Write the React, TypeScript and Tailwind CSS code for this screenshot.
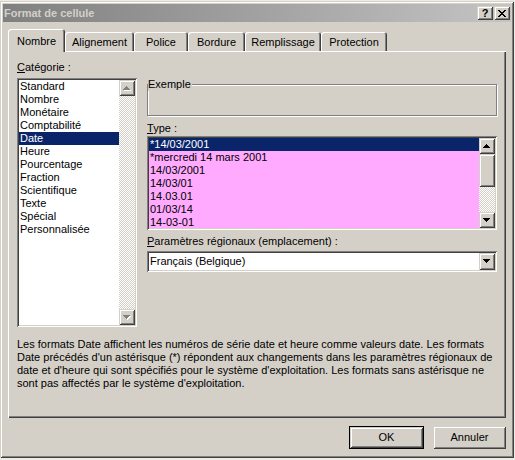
import React from "react";

const RAISED =
  "shadow-[inset_1px_1px_#d4d0c8,inset_-1px_-1px_#404040,inset_2px_2px_#ffffff,inset_-2px_-2px_#808080]";
const SUNKEN =
  "shadow-[inset_1px_1px_#808080,inset_-1px_-1px_#ffffff,inset_2px_2px_#404040,inset_-2px_-2px_#d4d0c8]";
const CHECKER =
  "bg-[image:conic-gradient(#ffffff_25%,#d4d0c8_0_50%,#ffffff_0_75%,#d4d0c8_0)] bg-[length:2px_2px]";

function Arrow({ dir, disabled }: { dir: "up" | "down"; disabled?: boolean }) {
  const rows: [number, number][] =
    dir === "up"
      ? [
          [3, 1],
          [2, 3],
          [1, 5],
          [0, 7],
        ]
      : [
          [0, 7],
          [1, 5],
          [2, 3],
          [3, 1],
        ];
  return (
    <svg width="8" height="5" viewBox="0 0 8 5" shapeRendering="crispEdges">
      {disabled &&
        rows.map(([x, w], i) => (
          <rect key={"s" + i} x={x + 1} y={i + 1} width={w} height={1} fill="#ffffff" />
        ))}
      {rows.map(([x, w], i) => (
        <rect key={i} x={x} y={i} width={w} height={1} fill={disabled ? "#808080" : "#000000"} />
      ))}
    </svg>
  );
}

function ScrollBtn({ dir, disabled }: { dir: "up" | "down"; disabled?: boolean }) {
  return (
    <div className={`w-[16px] h-[16px] shrink-0 bg-[#d4d0c8] flex items-center justify-center ${RAISED}`}>
      <Arrow dir={dir} disabled={disabled} />
    </div>
  );
}

function CloseGlyph() {
  const rows: [number, number][][] = [
    [
      [0, 2],
      [6, 2],
    ],
    [
      [1, 2],
      [5, 2],
    ],
    [[2, 4]],
    [[3, 2]],
    [[2, 4]],
    [
      [1, 2],
      [5, 2],
    ],
    [
      [0, 2],
      [6, 2],
    ],
  ];
  return (
    <svg width="8" height="7" viewBox="0 0 8 7" shapeRendering="crispEdges">
      {rows.map((r, i) =>
        r.map(([x, w], j) => <rect key={i + "-" + j} x={x} y={i} width={w} height={1} fill="#000" />)
      )}
    </svg>
  );
}

const categories = [
  "Standard",
  "Nombre",
  "Monétaire",
  "Comptabilité",
  "Date",
  "Heure",
  "Pourcentage",
  "Fraction",
  "Scientifique",
  "Texte",
  "Spécial",
  "Personnalisée",
];

const types = [
  "*14/03/2001",
  "*mercredi 14 mars 2001",
  "14/03/2001",
  "14/03/01",
  "14.03.01",
  "01/03/14",
  "14-03-01",
];

const tabs: { label: string; w: string }[] = [
  { label: "Alignement", w: "w-[69px]" },
  { label: "Police", w: "w-[54px]" },
  { label: "Bordure", w: "w-[57px]" },
  { label: "Remplissage", w: "w-[76px]" },
  { label: "Protection", w: "w-[66px]" },
];

const description = [
  "Les formats Date affichent les numéros de série date et heure comme valeurs date. Les formats",
  "Date précédés d'un astérisque (*) répondent aux changements dans les paramètres régionaux de",
  "date et d'heure qui sont spécifiés pour le système d'exploitation. Les formats sans astérisque ne",
  "sont pas affectés par le système d'exploitation.",
];

export default function App() {
  return (
    <div className="w-[515px] h-[460px] bg-[#ecebe6] overflow-hidden pt-[1px] font-['Liberation_Sans',Arial,sans-serif] text-[11px] leading-[13px] text-black">
      <div
        className={`w-[514px] h-[457px] bg-[#d4d0c8] p-[3px] flex flex-col shadow-[inset_1px_1px_#d4d0c8,inset_-1px_-1px_#404040,inset_2px_2px_#ffffff,inset_-2px_-2px_#808080]`}
      >
        {/* Title bar */}
        <div className="h-[18px] shrink-0 bg-linear-to-r from-[#808080] to-[#c4c4c4] flex items-center justify-between pl-[1px] pr-[1px]">
          <span className="font-bold text-[#d4d0c8] text-[11px] leading-[13px]">Format de cellule</span>
          <div className="flex items-center gap-[1px]">
            <div className={`w-[16px] h-[14px] bg-[#d4d0c8] flex items-center justify-center ${RAISED}`}>
              <span className="font-bold text-[11px] leading-[11px] text-black">?</span>
            </div>
            <div className={`w-[16px] h-[14px] bg-[#d4d0c8] flex items-center justify-center ${RAISED}`}>
              <CloseGlyph />
            </div>
          </div>
        </div>

        {/* Tabs */}
        <div className="mt-[7px] ml-[5px] h-[22px] flex items-start shrink-0">
          <div className="relative z-10 w-[57px] h-[23px] bg-[#d4d0c8] rounded-t-[3px] flex justify-center pt-[6px] shadow-[inset_1px_1px_#ffffff,inset_-1px_0_#404040,inset_-2px_0_#808080]">
            Nombre
          </div>
          {tabs.map((t) => (
            <div
              key={t.label}
              className={`${t.w} mt-[3px] h-[19px] bg-[#d4d0c8] rounded-t-[3px] flex justify-center pt-[4px] shadow-[inset_1px_1px_#ffffff,inset_-1px_0_#404040,inset_-2px_0_#808080]`}
            >
              {t.label}
            </div>
          ))}
        </div>

        {/* Panel */}
        <div className="ml-[5px] w-[498px] h-[367px] shrink-0 bg-[#d4d0c8] pl-[9px] pt-[10px] flex flex-col shadow-[inset_1px_1px_#ffffff,inset_-1px_-1px_#404040,inset_-2px_-2px_#808080]">
          <div className="flex">
            {/* Left column */}
            <div className="w-[120px] flex flex-col">
              <div className="h-[13px]">
                <span className="underline">C</span>atégorie :
              </div>
              <div className={`mt-[4px] h-[249px] p-[2px] flex bg-white ${SUNKEN}`}>
                <div className="w-[100px] flex flex-col">
                  {categories.map((c) => (
                    <div
                      key={c}
                      className={`h-[13px] pl-[1px] whitespace-nowrap ${
                        c === "Date" ? "bg-[#0a246a] text-white" : ""
                      }`}
                    >
                      {c}
                    </div>
                  ))}
                </div>
                <div className={`w-[16px] flex flex-col ${CHECKER}`}>
                  <ScrollBtn dir="up" disabled />
                  <div className="flex-1" />
                  <ScrollBtn dir="down" disabled />
                </div>
              </div>
            </div>

            {/* Right column */}
            <div className="ml-[10px] w-[350px] flex flex-col">
              <div className="relative mt-[23px] h-[32px] border border-[#808080] shadow-[inset_1px_1px_#ffffff,1px_1px_#ffffff]">
                <span className="absolute -top-[7px] left-[0px] bg-[#d4d0c8] pr-[1px]">Exemple</span>
              </div>
              <div className="mt-[6px] h-[13px]">
                <span className="underline">T</span>ype :
              </div>
              <div className={`mt-[1px] h-[94px] p-[2px] flex bg-[#ffaaff] ${SUNKEN}`}>
                <div className="w-[330px] flex flex-col">
                  {types.map((t, i) => (
                    <div
                      key={t}
                      className={`h-[13px] pl-[1px] whitespace-nowrap ${
                        i === 0 ? "bg-[#0a246a] text-white" : ""
                      }`}
                    >
                      {t}
                    </div>
                  ))}
                </div>
                <div className={`w-[16px] flex flex-col ${CHECKER}`}>
                  <ScrollBtn dir="up" />
                  <div className={`h-[33px] shrink-0 bg-[#d4d0c8] ${RAISED}`} />
                  <div className="flex-1" />
                  <ScrollBtn dir="down" />
                </div>
              </div>
              <div className="mt-[5px] h-[13px]">
                <span className="underline">P</span>aramètres régionaux (emplacement) :
              </div>
              <div className={`mt-[3px] h-[21px] p-[2px] flex bg-white ${SUNKEN}`}>
                <div className="flex-1 pl-[1px] flex items-center">Français (Belgique)</div>
                <div className={`w-[16px] h-[17px] bg-[#d4d0c8] flex items-center justify-center ${RAISED}`}>
                  <Arrow dir="down" />
                </div>
              </div>
            </div>
          </div>

          {/* Description */}
          <div className="mt-[11px] flex flex-col">
            {description.map((l) => (
              <div key={l} className="h-[13px] whitespace-nowrap">
                {l}
              </div>
            ))}
          </div>
        </div>

        {/* Buttons */}
        <div className="mt-[8px] flex justify-end gap-[9px] pr-[5px]">
          <div className="w-[75px] h-[23px] border border-black">
            <div className={`w-full h-full bg-[#d4d0c8] flex items-center justify-center ${RAISED}`}>OK</div>
          </div>
          <div className={`w-[73px] h-[23px] bg-[#d4d0c8] flex items-center justify-center ${RAISED}`}>
            Annuler
          </div>
        </div>
      </div>
    </div>
  );
}
